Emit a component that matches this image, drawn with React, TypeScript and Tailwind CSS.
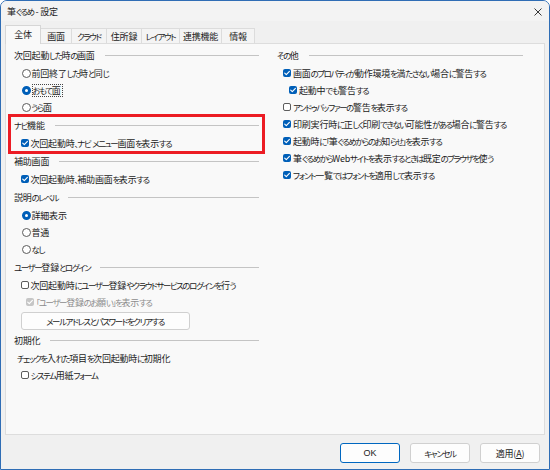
import React from "react";

function T({ s }: { s: string }) {
  const parts = s.match(/[\u30a0-\u30ff]+|[\u3000-\u309f]+|[^\u3000-\u30ff]+/g) || [];
  return (
    <>
      {parts.map((p, i) =>
        /[\u30a0-\u30ff]/.test(p) ? (
          <span key={i} className="text-[8.4px] tracking-[-1.3px]">
            {p}
          </span>
        ) : /[\u3000-\u309f]/.test(p) ? (
          <span key={i} className="text-[8.4px] tracking-[-1.4px]">
            {p}
          </span>
        ) : (
          <span key={i}>{p}</span>
        )
      )}
    </>
  );
}

function Check({ checked, disabled }: { checked?: boolean; disabled?: boolean }) {
  if (!checked) {
    return <span className="w-[8px] h-[8px] shrink-0 rounded-[2px] border border-[#5c5c5c] bg-white" />;
  }
  return (
    <span
      className={`w-[8px] h-[8px] shrink-0 rounded-[2px] flex items-center justify-center ${
        disabled ? "bg-[#c6c6c6]" : "bg-[#005fb8]"
      }`}
    >
      <svg width="8" height="8" viewBox="0 0 8 8">
        <path d="M1.7 4.1 L3.3 5.7 L6.4 2.4" fill="none" stroke="white" strokeWidth="1.1" strokeLinecap="round" strokeLinejoin="round" />
      </svg>
    </span>
  );
}

function Radio({ on }: { on?: boolean }) {
  return on ? (
    <span className="w-[9px] h-[9px] shrink-0 rounded-full border-[3px] border-[#005fb8] bg-white" />
  ) : (
    <span className="w-[9px] h-[9px] shrink-0 rounded-full border border-[#5c5c5c] bg-white" />
  );
}

function Heading({ text }: { text: string }) {
  return (
    <div className="h-[19px] flex items-center gap-[10px]">
      <span className="whitespace-nowrap">
        <T s={text} />
      </span>
      <span className="flex-1 h-px bg-[#c4c4c4]" />
    </div>
  );
}

function CRow({ text, checked, disabled, indent }: { text: string; checked?: boolean; disabled?: boolean; indent: string }) {
  return (
    <div className={`h-[17px] flex items-center gap-[2px] ${indent}`}>
      <Check checked={checked} disabled={disabled} />
      <span className={`whitespace-nowrap ${disabled ? "text-[#8c8c8c]" : ""}`}>
        <T s={text} />
      </span>
    </div>
  );
}

function RRow({ text, on, focus }: { text: string; on?: boolean; focus?: boolean }) {
  return (
    <div className="h-[17px] flex items-center gap-[1px] pl-[7.5px]">
      <Radio on={on} />
      {focus ? (
        <span className="whitespace-nowrap h-[13px] flex items-center border border-dotted border-[#444] pr-[2px]">
          <T s={text} />
        </span>
      ) : (
        <span className="whitespace-nowrap">
          <T s={text} />
        </span>
      )}
    </div>
  );
}

const tabs = [
  { t: "画面", w: "w-[31px]" },
  { t: "クラウド", w: "w-[35px]" },
  { t: "住所録", w: "w-[35px]" },
  { t: "レイアウト", w: "w-[38px]" },
  { t: "連携機能", w: "w-[42px]" },
  { t: "情報", w: "w-[33px]" },
];

export default function App() {
  return (
    <div className='w-[550px] h-[470px] font-["Noto_Sans_CJK_JP",sans-serif] [font-feature-settings:"palt"_1] text-[9px] tracking-[-0.2px] leading-none text-[#1b1b1b]'>
      <div className="w-full h-full border border-[#2f6db5] rounded-t-[7px] bg-[#f0f0f0] flex flex-col overflow-hidden">
        {/* title bar */}
        <div className="h-[20px] shrink-0 bg-[#f3f3f3] flex items-center justify-between pl-[6px] pr-[7px]">
          <span className="whitespace-pre">
            <T s="筆ぐるめ - 設定" />
          </span>
          <svg width="8" height="8" viewBox="0 0 8 8" className="mt-[2px]">
            <path d="M0.5 0.5 L7.5 7.5 M7.5 0.5 L0.5 7.5" stroke="#222" strokeWidth="0.9" />
          </svg>
        </div>

        <div className="flex-1 flex flex-col px-[4px]">
          {/* tabs */}
          <div className="h-[22px] shrink-0 flex items-end">
            <div className="w-[36px] h-[19px] -mb-px relative z-10 bg-[#f9f9f9] border border-b-0 border-[#d6d6d6] flex items-center justify-center pb-[1px]">
              全体
            </div>
            {tabs.map((tb) => (
              <div
                key={tb.t}
                className={`${tb.w} h-[15px] bg-[#f4f4f4] border border-l-0 border-b-0 border-[#dcdcdc] flex items-center justify-center whitespace-nowrap`}
              >
                <T s={tb.t} />
              </div>
            ))}
          </div>

          {/* panel */}
          <div className="h-[392px] shrink-0 bg-[#f9f9f9] border border-[#dddddd] flex pl-[8px] pt-[1.5px] gap-[18px]">
            {/* left column */}
            <div className="w-[245px] flex flex-col">
              <Heading text="次回起動した時の画面" />
              <RRow text="前回終了した時と同じ" />
              <RRow text="おもて面" on focus />
              <RRow text="うら面" />
              <div className="relative">
                <Heading text="ナビ機能" />
                <CRow text="次回起動時、ナビ メニュー画面を表示する" checked indent="pl-[6.5px]" />
                <div className="absolute -left-[6px] -right-[6px] -top-[2px] -bottom-[2px] border-[3px] border-[#ec1c24]" />
              </div>
              <Heading text="補助画面" />
              <CRow text="次回起動時、補助画面を表示する" checked indent="pl-[6.5px]" />
              <Heading text="説明のレベル" />
              <RRow text="詳細表示" on />
              <RRow text="普通" />
              <RRow text="なし" />
              <Heading text="ユーザー登録とログイン" />
              <CRow text="次回起動時にユーザー登録やクラウドサービスのログインを行う" indent="pl-[6.5px]" />
              <CRow text="「ユーザー登録のお願い」を表示する" checked disabled indent="pl-[12px]" />
              <div className="h-[20px] flex items-center pl-[6.5px]">
                <div className="w-[169px] h-[18px] mt-[1px] rounded-[3px] border border-[#d0d0d0] bg-[#fdfdfd] flex items-center justify-center">
                  <T s="メールアドレスとパスワードをクリアする" />
                </div>
              </div>
              <Heading text="初期化" />
              <div className="h-[17px] flex items-center pl-[3px]">
                <T s="チェックを入れた項目を次回起動時に初期化" />
              </div>
              <CRow text="システム用紙フォーム" indent="pl-[6.5px]" />
            </div>

            {/* right column */}
            <div className="w-[246px] flex flex-col">
              <Heading text="その他" />
              <CRow text="画面のプロパティが動作環境を満たさない場合に警告する" checked indent="pl-[6px]" />
              <CRow text="起動中でも警告する" checked indent="pl-[12px]" />
              <CRow text="アンドゥバッファーの警告を表示する" indent="pl-[6px]" />
              <CRow text="印刷実行時に正しく印刷できない可能性がある場合に警告する" checked indent="pl-[6px]" />
              <CRow text="起動時に「筆ぐるめからのお知らせ」を表示する" checked indent="pl-[6px]" />
              <CRow text="筆ぐるめからWebサイトを表示するときは既定のブラウザを使う" checked indent="pl-[6px]" />
              <CRow text="フォント一覧ではフォントを適用して表示する" checked indent="pl-[6px]" />
            </div>
          </div>

          {/* buttons */}
          <div className="mt-[8px] flex justify-end gap-[10px] pr-[5px]">
            <div className="w-[60px] h-[20px] rounded-[3px] border border-[#0067c0] bg-[#fdfdfd] flex items-center justify-center font-['Liberation_Sans',sans-serif] tracking-normal">
              OK
            </div>
            <div className="w-[60px] h-[20px] rounded-[3px] border border-[#d0d0d0] bg-[#fdfdfd] flex items-center justify-center">
              <T s="キャンセル" />
            </div>
            <div className="w-[60px] h-[20px] rounded-[3px] border border-[#d0d0d0] bg-[#fdfdfd] flex items-center justify-center">
              適用(<span className="underline">A</span>)
            </div>
          </div>
        </div>
      </div>
    </div>
  );
}
